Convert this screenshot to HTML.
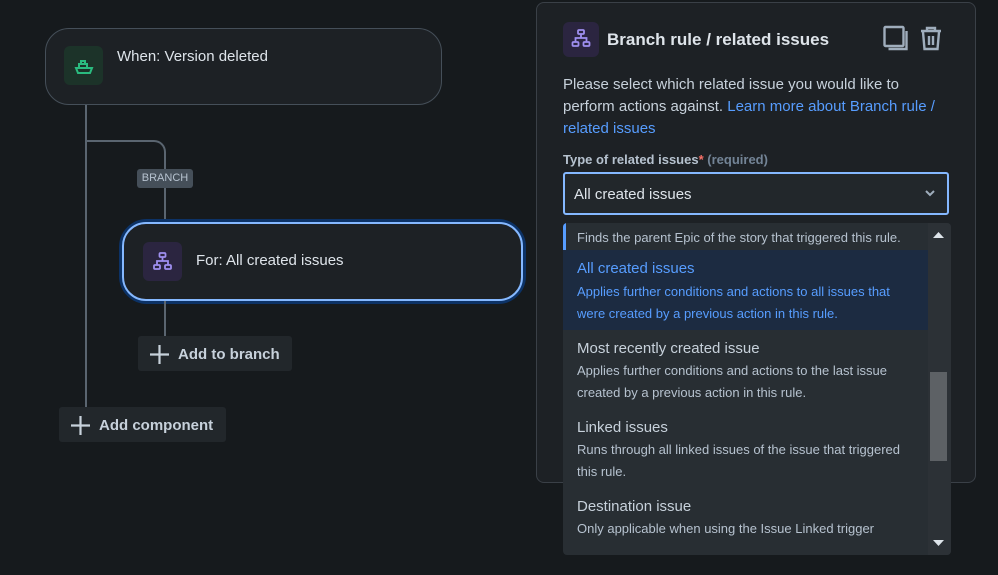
<!DOCTYPE html><html><head><style>
*{box-sizing:border-box;margin:0;padding:0}
body{width:998px;height:575px;background:#161a1d;font-family:"Liberation Sans",sans-serif;color:#c7d1db;position:relative;overflow:hidden}
.a{position:absolute}
.card{background:#1d2125;border:1px solid #454f59;border-radius:24px}
.btn{background:#22272b;border-radius:3px;color:#c7d1db;font-weight:bold;font-size:15px;display:flex;align-items:center}
.ln{background:#5a6570}
.it{position:absolute;left:0;width:365px;padding-left:14px}
.it .t{font-size:15px;color:#c7d1db}
.it .d{font-size:13px;color:#b6c2cf;line-height:22px;width:335px}
</style></head><body>
<div class="a ln" style="left:85px;top:104px;width:2px;height:304px"></div>
<div class="a" style="left:87px;top:140px;width:79px;height:84px;border-top:2px solid #5a6570;border-right:2px solid #5a6570;border-top-right-radius:12px"></div>
<div class="a" style="left:137px;top:169px;width:56px;height:19px;background:#454f59;border-radius:3px;font-size:11px;color:#b6c2cf;text-align:center;line-height:19px">BRANCH</div>
<div class="a card" style="left:45px;top:28px;width:397px;height:77px"></div>
<div class="a" style="left:64px;top:46px;width:39px;height:39px;background:#1c3329;border-radius:6px">
<svg width="39" height="39" viewBox="0 0 39 39" fill="none" stroke="#2abb7f" stroke-width="2"><path d="M12 22h16l-2 5H14z M15 22v-4h8v4 M17 18v-3h4v3"/></svg></div>
<div class="a" style="left:117px;top:48px;font-size:15px;color:#dee4ea">When: Version deleted</div>
<div class="a" style="left:119px;top:219px;width:407px;height:85px;border-radius:28px;border:4px solid #0c3266"></div>
<div class="a card" style="left:122px;top:222px;width:401px;height:79px;border:2px solid #85b8ff;border-radius:24px"></div>
<div class="a" style="left:143px;top:242px;width:39px;height:39px;background:#2b2540;border-radius:6px">
<svg width="39" height="39" viewBox="0 0 39 39" fill="none" stroke="#9f8fef" stroke-width="1.8"><rect x="16.5" y="11" width="6" height="4" rx="1"/><path d="M19.5 15v4M14 23v-4h11v4"/><rect x="11" y="23" width="6" height="4" rx="1"/><rect x="22" y="23" width="6" height="4" rx="1"/></svg></div>
<div class="a" style="left:196px;top:252px;font-size:15px;color:#dee4ea">For: All created issues</div>
<div class="a ln" style="left:164px;top:301px;width:2px;height:36px"></div>
<div class="a btn" style="left:138px;top:336px;width:154px;height:35px;padding-left:11px;padding-top:2px"><svg width="21" height="21" style="margin-right:8px" stroke="#c7d1db" stroke-width="2.2"><path d="M10.5 1v19M1 10.5h19"/></svg>Add to branch</div>
<div class="a btn" style="left:59px;top:407px;width:167px;height:35px;padding-left:11px;padding-top:2px"><svg width="21" height="21" style="margin-right:8px" stroke="#c7d1db" stroke-width="2.2"><path d="M10.5 1v19M1 10.5h19"/></svg>Add component</div>

<div class="a" style="left:536px;top:2px;width:440px;height:481px;background:#1d2125;border:1px solid #3a4047;border-radius:8px"></div>
<div class="a" style="left:563px;top:22px;width:36px;height:35px;background:#2b2540;border-radius:6px">
<svg width="36" height="35" viewBox="0 0 36 35" fill="none" stroke="#9f8fef" stroke-width="1.8"><rect x="15" y="8" width="6" height="4" rx="1"/><path d="M18 12v4M12.5 20v-4h11v4"/><rect x="9.5" y="20" width="6" height="4" rx="1"/><rect x="20.5" y="20" width="6" height="4" rx="1"/></svg></div>
<div class="a" style="left:607px;top:30px;font-size:17px;font-weight:bold;color:#dee4ea">Branch rule / related issues</div>
<svg class="a" style="left:882px;top:24px" width="64" height="30" fill="none" stroke="#9fadbc" stroke-width="2.4"><rect x="2.5" y="3" width="19" height="19" rx="1"/><path d="M24.5 7v18h-18"/><path d="M39 7h20M45 7V4h8v3M41 8l1.5 17h13L57 8M47 12v9M51 12v9"/></svg>
<div class="a" style="left:563px;top:74px;width:390px;font-size:15px;line-height:22px;color:#c7d1db">Please select which related issue you would like to perform actions against. <span style="color:#579dff">Learn more about Branch rule / related issues</span></div>
<div class="a" style="left:563px;top:152px;font-size:13px;color:#b6c2cf;font-weight:bold">Type of related issues<span style="color:#f87168">*</span> <span style="color:#738496">(required)</span></div>
<div class="a" style="left:563px;top:172px;width:386px;height:43px;border:2px solid #85b8ff;border-radius:3px;background:#22272b;font-size:15px;padding:12px 0 0 9px;color:#dee4ea">All created issues
<svg class="a" style="right:12px;top:16px" width="10" height="7" fill="none" stroke="#9fadbc" stroke-width="2"><path d="M1 1l4 4 4-4"/></svg></div>

<div class="a" style="left:563px;top:223px;width:388px;height:332px;background:#282e33;border-radius:4px;overflow:hidden">
<div class="a" style="left:0;top:0;width:3px;height:107px;background:#579dff"></div>
<div class="it" style="top:4px"><div class="d" style="width:360px">Finds the parent Epic of the story that triggered this rule.</div></div>
<div class="it" style="top:27px;height:80px;background:#1c2b41;padding-top:10px"><div class="t" style="color:#579dff">All created issues</div><div class="d" style="color:#579dff;margin-top:4px">Applies further conditions and actions to all issues that were created by a previous action in this rule.</div></div>
<div class="it" style="top:117px"><div class="t">Most recently created issue</div><div class="d" style="margin-top:3px">Applies further conditions and actions to the last issue created by a previous action in this rule.</div></div>
<div class="it" style="top:196px"><div class="t">Linked issues</div><div class="d" style="margin-top:3px">Runs through all linked issues of the issue that triggered this rule.</div></div>
<div class="it" style="top:275px"><div class="t">Destination issue</div><div class="d" style="margin-top:3px">Only applicable when using the Issue Linked trigger</div></div>
<div class="a" style="left:365px;top:0;width:23px;height:332px;background:#2c3136"></div>
<div class="a" style="left:367px;top:149px;width:17px;height:89px;background:#5d6165"></div>
<svg class="a" style="left:370px;top:8px" width="11" height="7"><path d="M0 7L5.5 1 11 7z" fill="#dee4ea"/></svg>
<svg class="a" style="left:370px;top:317px" width="11" height="7"><path d="M0 0L5.5 6 11 0z" fill="#dee4ea"/></svg>
</div>
</body></html>
